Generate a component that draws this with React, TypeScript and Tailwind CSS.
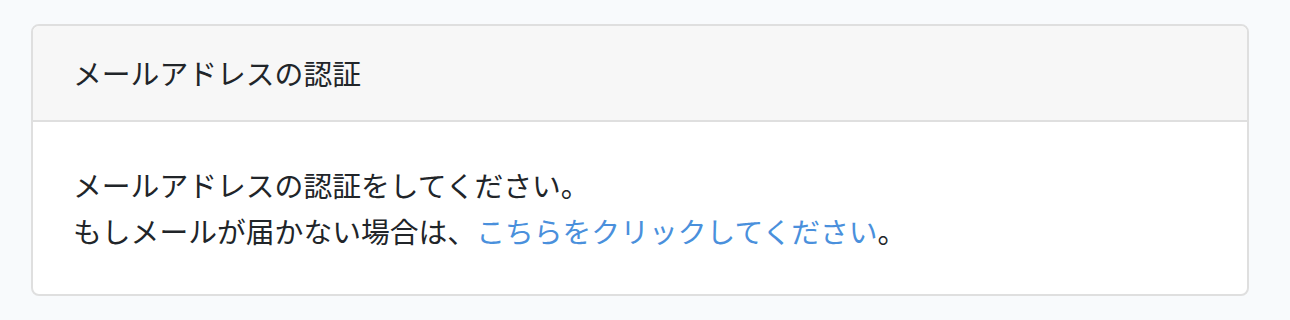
export default function App() {
  return (
    <div
      className="min-h-[320px] bg-[#f8fafc] pt-[24px] px-[31px] text-[#212529]"
      style={{ fontFamily: '"Noto Sans CJK JP", "Noto Sans", sans-serif' }}
    >
      <div className="w-[1218px] rounded-[8px] border-2 border-[#dfdfdf] bg-white overflow-hidden">
        {/* Header */}
        <div className="bg-[#f7f7f7] border-b-2 border-[#dfdfdf] px-[40px] py-[24px] text-[28.8px] leading-[46px]">
          メールアドレスの認証
        </div>

        {/* Body */}
        <div className="px-[40px] py-[40px] text-[28.8px] leading-[46px]">
          <p>メールアドレスの認証をしてください。</p>
          <p>
            もしメールが届かない場合は、
            <a href="#" className="text-[#4a90dc]">
              こちらをクリックしてください
            </a>
            。
          </p>
        </div>
      </div>
    </div>
  );
}
